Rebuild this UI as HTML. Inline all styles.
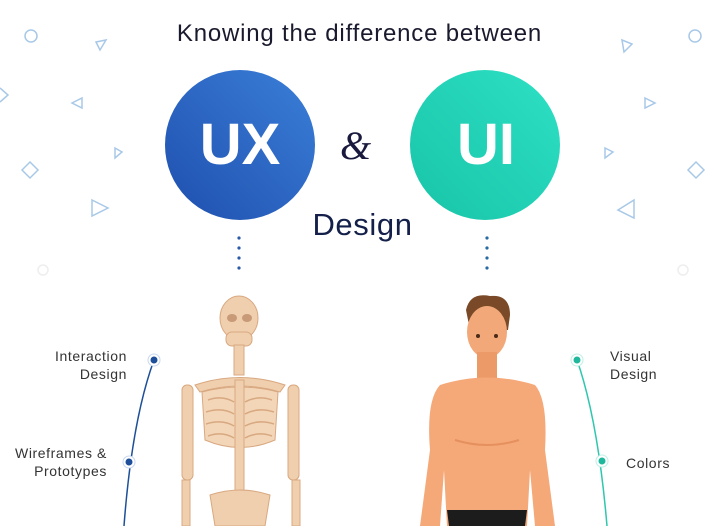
<!DOCTYPE html>
<html><head><meta charset="utf-8"><style>
body{margin:0;width:719px;height:526px;overflow:hidden;background:#fff;font-family:"Liberation Sans",sans-serif;position:relative}
.t{position:absolute;color:#333;font-size:14px;line-height:18px;letter-spacing:0.6px}
</style></head><body>
<svg width="719" height="526" style="position:absolute;left:0;top:0">
<defs>
<linearGradient id="gx" x1="1" y1="0" x2="0" y2="1"><stop offset="0" stop-color="#3a7fd8"/><stop offset="1" stop-color="#1f4fae"/></linearGradient>
<linearGradient id="gi" x1="1" y1="0" x2="0" y2="1"><stop offset="0" stop-color="#2ee0c4"/><stop offset="1" stop-color="#18c4a8"/></linearGradient>
</defs>
<g fill="none" stroke="#a8c8e8" stroke-width="1.5">
<circle cx="31" cy="36" r="6"/><circle cx="695" cy="36" r="6"/>
<path d="M96 42 L106 40 L100 50Z"/><path d="M622 40 L632 44 L624 52Z"/>
<path d="M0 88 L8 95 L0 102"/><path d="M72 103 L82 98 L82 108Z"/><path d="M645 98 L655 103 L645 108Z"/>
<path d="M115 148 L122 152 L115 158Z"/><path d="M605 148 L613 152 L605 158Z"/>
<path d="M22 170 L30 162 L38 170 L30 178Z"/><path d="M688 170 L696 162 L704 170 L696 178Z"/>
<path d="M92 200 L108 208 L92 216Z"/><path d="M618 210 L634 200 L634 218Z"/>
<circle cx="43" cy="270" r="5" stroke="#eee"/><circle cx="683" cy="270" r="5" stroke="#eee"/>
</g>
<circle cx="240" cy="145" r="75" fill="url(#gx)"/>
<circle cx="485" cy="145" r="75" fill="url(#gi)"/>
<g fill="#2a5ba8"><circle cx="239" cy="238" r="1.6"/><circle cx="239" cy="248" r="1.6"/><circle cx="239" cy="258" r="1.6"/><circle cx="239" cy="268" r="1.6"/></g>
<g fill="#2a6aa0"><circle cx="487" cy="238" r="1.6"/><circle cx="487" cy="248" r="1.6"/><circle cx="487" cy="258" r="1.6"/><circle cx="487" cy="268" r="1.6"/></g>
<path d="M154 360 Q132 420 124 526" fill="none" stroke="#1e4f9a" stroke-width="1.5"/>
<circle cx="154" cy="360" r="6" fill="#fff" stroke="#c8d8ee"/><circle cx="154" cy="360" r="3.5" fill="#1e4f9a"/>
<circle cx="129" cy="462" r="6" fill="#fff" stroke="#c8d8ee"/><circle cx="129" cy="462" r="3.5" fill="#1e4f9a"/>
<path d="M577 360 Q598 420 607 526" fill="none" stroke="#2ec7ad" stroke-width="1.5"/>
<circle cx="577" cy="360" r="6" fill="#fff" stroke="#bfeee5"/><circle cx="577" cy="360" r="3.5" fill="#1fb89c"/>
<circle cx="602" cy="461" r="6" fill="#fff" stroke="#bfeee5"/><circle cx="602" cy="461" r="3.5" fill="#1fb89c"/>
<g fill="#f0cfae" stroke="#d8a880" stroke-width="1">
<ellipse cx="239" cy="318" rx="19" ry="22"/>
<rect x="226" y="332" width="26" height="14" rx="6"/>
<rect x="234" y="345" width="10" height="30"/>
<path d="M195 385 Q240 370 285 385 L280 392 Q240 380 200 392Z"/>
<path d="M202 392 Q240 382 278 392 L275 440 Q240 455 205 440Z" fill="#f3d6b8"/>
<rect x="235" y="380" width="9" height="120"/>
<rect x="182" y="385" width="11" height="95" rx="5"/><rect x="288" y="385" width="11" height="95" rx="5"/>
<rect x="182" y="480" width="8" height="46"/><rect x="292" y="480" width="8" height="46"/>
<path d="M210 495 Q240 485 270 495 L265 526 L215 526Z"/>
</g>
<g stroke="#d8a880" stroke-width="1.5" fill="none">
<path d="M208 400 Q222 395 234 402"/><path d="M206 412 Q222 407 234 414"/><path d="M206 424 Q222 419 234 426"/><path d="M208 436 Q222 431 234 438"/>
<path d="M272 400 Q258 395 245 402"/><path d="M274 412 Q258 407 245 414"/><path d="M274 424 Q258 419 245 426"/><path d="M272 436 Q258 431 245 438"/>
</g>
<g fill="#c89a78"><ellipse cx="232" cy="318" rx="5" ry="4"/><ellipse cx="247" cy="318" rx="5" ry="4"/></g>
<path d="M466 310 Q470 292 490 296 Q510 294 510 315 L508 330 L470 330Z" fill="#7a4a28"/>
<ellipse cx="487" cy="332" rx="20" ry="26" fill="#f2a878"/>
<rect x="477" y="352" width="20" height="30" fill="#ec9a68"/>
<path d="M440 385 Q487 370 535 385 Q548 400 545 450 L555 526 L535 526 L530 470 L527 526 L447 526 L444 470 L440 526 L420 526 L430 450 Q426 400 440 385Z" fill="#f5a878"/>
<path d="M447 510 L527 510 L525 526 L449 526Z" fill="#1c1c1c"/>
<path d="M455 440 Q487 450 519 440" fill="none" stroke="#e6905e" stroke-width="2"/>
<g fill="#4a2a18"><circle cx="478" cy="336" r="2"/><circle cx="496" cy="336" r="2"/></g>
</svg>
<div style="position:absolute;left:0;width:719px;top:20px;text-align:center;font-size:24px;letter-spacing:0.8px;color:#1a1a2e">Knowing the difference between</div>
<div style="position:absolute;left:165px;width:150px;top:110px;text-align:center;font-size:58px;font-weight:bold;color:#fff;line-height:70px">UX</div>
<div style="position:absolute;left:411px;width:150px;top:110px;text-align:center;font-size:58px;font-weight:bold;color:#fff;line-height:70px">UI</div>
<div style="position:absolute;left:340px;top:122px;font-size:40px;font-style:italic;font-family:'Liberation Serif',serif;color:#1a1a3e">&amp;</div>
<div style="position:absolute;left:290px;width:145px;top:207px;text-align:center;font-size:31px;letter-spacing:0.6px;color:#14204a">Design</div>
<div class="t" style="right:592px;top:347px;text-align:right">Interaction<br>Design</div>
<div class="t" style="right:612px;top:444px;text-align:right">Wireframes &amp;<br>Prototypes</div>
<div class="t" style="left:610px;top:347px">Visual<br>Design</div>
<div class="t" style="left:626px;top:454px">Colors</div>
</body></html>
